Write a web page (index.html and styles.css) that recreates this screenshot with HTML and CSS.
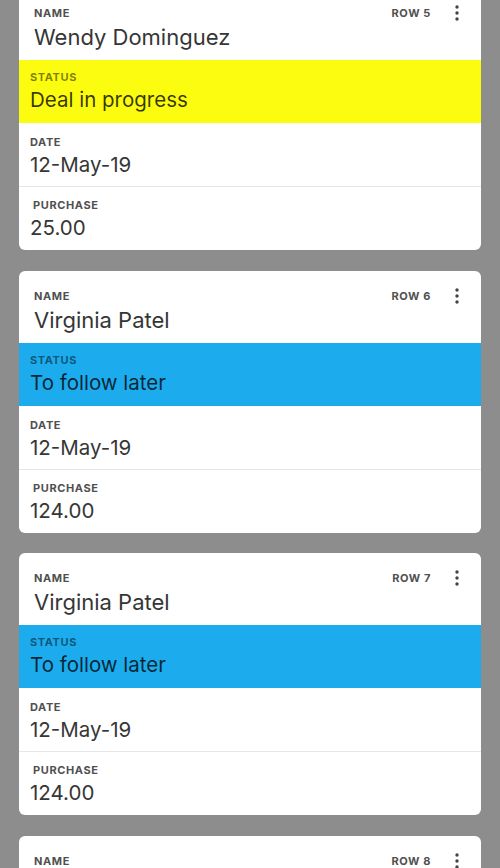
FILE: index.html
```html
<!DOCTYPE html>
<html lang="en">
<head>
<meta charset="utf-8">
<title>Rows</title>
<link rel="stylesheet" href="styles.css">
</head>
<body>
<main class="list">
  <article class="card">
    <header class="card-head">
      <div class="field">
        <div class="label">Name</div>
        <div class="value name">Wendy Dominguez</div>
      </div>
      <div class="head-right">
        <span class="row-no">Row 5</span>
        <svg class="kebab" width="6" height="18" viewBox="0 0 6 18"><circle cx="3" cy="3" r="1.7"/><circle cx="3" cy="9" r="1.7"/><circle cx="3" cy="15" r="1.7"/></svg>
      </div>
    </header>
    <section class="status status-yellow">
      <div class="label">Status</div>
      <div class="value">Deal in progress</div>
    </section>
    <section class="row row-date">
      <div class="label">Date</div>
      <div class="value">12-May-19</div>
    </section>
    <section class="row row-purchase">
      <div class="label">Purchase</div>
      <div class="value">25.00</div>
    </section>
  </article>

  <article class="card">
    <header class="card-head">
      <div class="field">
        <div class="label">Name</div>
        <div class="value name">Virginia Patel</div>
      </div>
      <div class="head-right">
        <span class="row-no">Row 6</span>
        <svg class="kebab" width="6" height="18" viewBox="0 0 6 18"><circle cx="3" cy="3" r="1.7"/><circle cx="3" cy="9" r="1.7"/><circle cx="3" cy="15" r="1.7"/></svg>
      </div>
    </header>
    <section class="status status-blue">
      <div class="label">Status</div>
      <div class="value">To follow later</div>
    </section>
    <section class="row row-date">
      <div class="label">Date</div>
      <div class="value">12-May-19</div>
    </section>
    <section class="row row-purchase">
      <div class="label">Purchase</div>
      <div class="value">124.00</div>
    </section>
  </article>

  <article class="card">
    <header class="card-head">
      <div class="field">
        <div class="label">Name</div>
        <div class="value name">Virginia Patel</div>
      </div>
      <div class="head-right">
        <span class="row-no">Row 7</span>
        <svg class="kebab" width="6" height="18" viewBox="0 0 6 18"><circle cx="3" cy="3" r="1.7"/><circle cx="3" cy="9" r="1.7"/><circle cx="3" cy="15" r="1.7"/></svg>
      </div>
    </header>
    <section class="status status-blue">
      <div class="label">Status</div>
      <div class="value">To follow later</div>
    </section>
    <section class="row row-date">
      <div class="label">Date</div>
      <div class="value">12-May-19</div>
    </section>
    <section class="row row-purchase">
      <div class="label">Purchase</div>
      <div class="value">124.00</div>
    </section>
  </article>

  <article class="card">
    <header class="card-head">
      <div class="field">
        <div class="label">Name</div>
      </div>
      <div class="head-right">
        <span class="row-no">Row 8</span>
        <svg class="kebab" width="6" height="18" viewBox="0 0 6 18"><circle cx="3" cy="3" r="1.7"/><circle cx="3" cy="9" r="1.7"/><circle cx="3" cy="15" r="1.7"/></svg>
      </div>
    </header>
  </article>
</main>
</body>
</html>
```

FILE: styles.css
```css
html, body {
  margin: 0;
  padding: 0;
  height: 100%;
  overflow: hidden;
}

body {
  background: #8d8d8d;
  font-family: Inter, "Noto Sans", "Liberation Sans", sans-serif;
  color: #383838;
}

.list {
  display: flex;
  flex-direction: column;
  gap: 20.5px;
  padding: 0 19px;
  margin-top: -12px;
}

.card {
  background: #ffffff;
  border-radius: 6px;
  overflow: hidden;
  display: flex;
  flex-direction: column;
}

.label {
  font-size: 11px;
  line-height: 14px;
  font-weight: 700;
  letter-spacing: 0.6px;
  text-transform: uppercase;
  color: #505050;
}

.value {
  font-size: 20.5px;
  line-height: 24px;
  margin-top: 4px;
  color: #363636;
}

.card-head {
  height: 72px;
  box-sizing: border-box;
  padding: 18px 21px 0 15px;
  display: flex;
  justify-content: space-between;
  align-items: flex-start;
}

.card-head .value.name {
  font-size: 22px;
  line-height: 26px;
  margin-top: 4px;
}

.head-right {
  display: flex;
  align-items: center;
  gap: 23px;
  height: 14px;
}

.row-no {
  font-size: 11px;
  font-weight: 700;
  letter-spacing: 0.6px;
  text-transform: uppercase;
  color: #505050;
}

.kebab {
  fill: #444444;
  display: block;
}

.status {
  height: 63px;
  box-sizing: border-box;
  padding: 10px 12px 0 11px;
}

.status .label {
  color: rgba(0, 0, 0, 0.5);
}

.status .value {
  color: rgba(0, 0, 0, 0.78);
}

.status-yellow {
  background: #fcfc10;
}

.status-blue {
  background: #1cabec;
}

.row {
  box-sizing: border-box;
  padding: 12px 12px 0 11px;
}

.row-date {
  height: 64px;
  border-bottom: 1px solid #e6e6e6;
}

.row-purchase {
  height: 63px;
  padding-top: 11px;
}

.row-purchase .label {
  margin-left: 3px;
}
```
